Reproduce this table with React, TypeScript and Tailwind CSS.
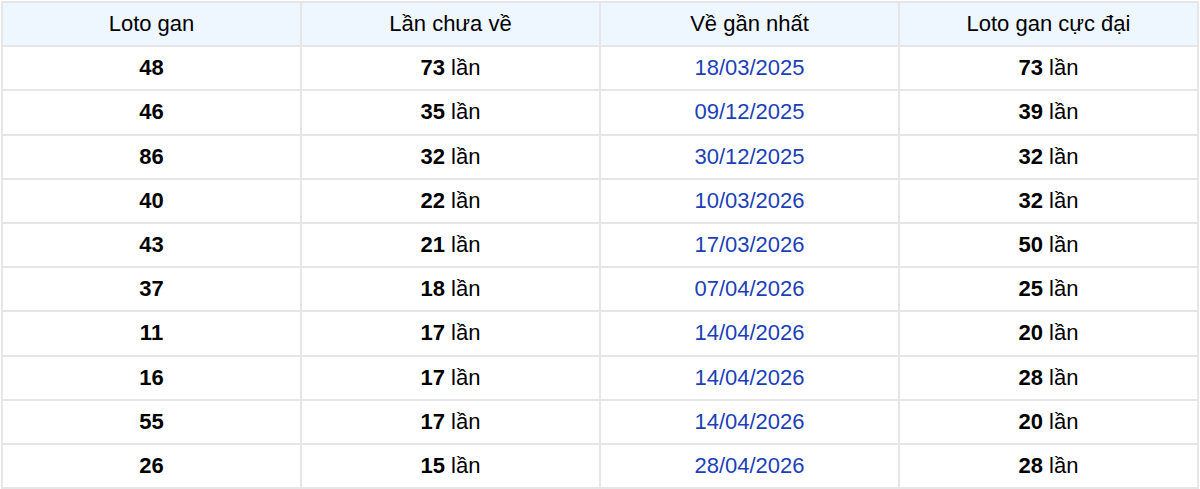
const ROWS: [string, number, string, number][] = [
    ["48", 73, "18/03/2025", 73],
    ["46", 35, "09/12/2025", 39],
    ["86", 32, "30/12/2025", 32],
    ["40", 22, "10/03/2026", 32],
    ["43", 21, "17/03/2026", 50],
    ["37", 18, "07/04/2026", 25],
    ["11", 17, "14/04/2026", 20],
    ["16", 17, "14/04/2026", 28],
    ["55", 17, "14/04/2026", 20],
    ["26", 15, "28/04/2026", 28]
];

const HEADERS = ["Loto gan", "Lần chưa về", "Về gần nhất", "Loto gan cực đại"];

export default function App() {
    return (
        <div className="bg-white p-px font-['Liberation_Sans',Arial,sans-serif] text-[22px] leading-none text-black">
            <table className="w-full table-fixed border-collapse text-center">
                <thead>
                    <tr className="bg-[#eef6ff]">
                        {HEADERS.map(h => (
                            <th key={h} className="h-[44.2px] border-2 border-[#e6e6e6] font-normal">
                                {h}
                            </th>
                        ))}
                    </tr>
                </thead>
                <tbody>
                    {ROWS.map(([num, miss, date, max], i) => (
                        <tr key={i}>
                            <td className="h-[44.2px] border-2 border-[#e6e6e6] font-bold">{num}</td>
                            <td className="border-2 border-[#e6e6e6]">
                                <b>{miss}</b> lần
                            </td>
                            <td className="border-2 border-[#e6e6e6] text-[#1c3fb8]">{date}</td>
                            <td className="border-2 border-[#e6e6e6]">
                                <b>{max}</b> lần
                            </td>
                        </tr>
                    ))}
                </tbody>
            </table>
        </div>
    );
}
